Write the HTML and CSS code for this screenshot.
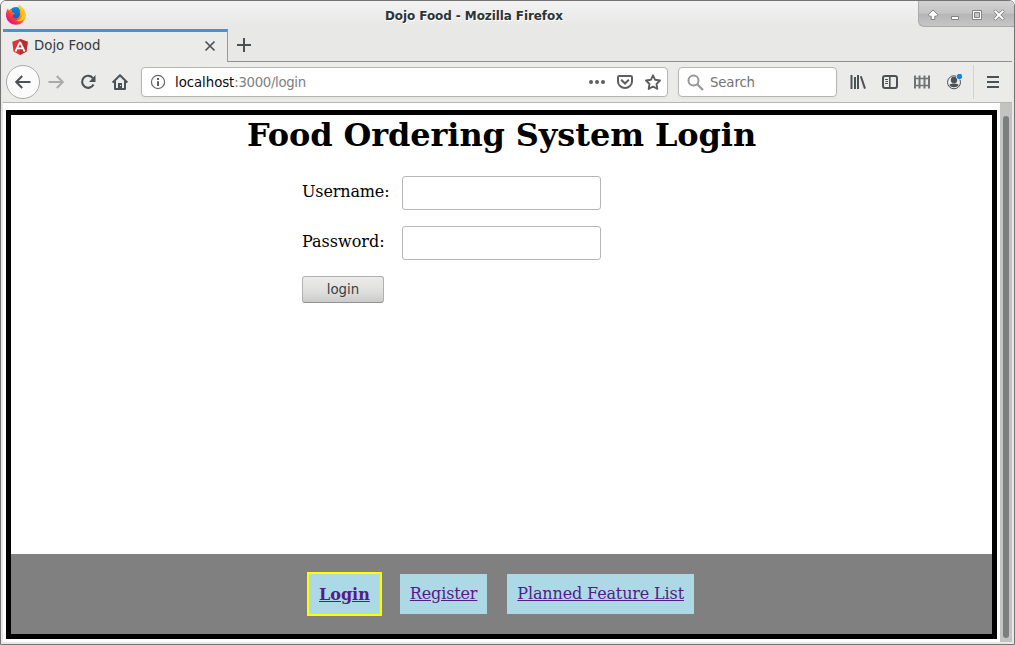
FILE: index.html
```html
<!DOCTYPE html>
<html lang="en">
<head>
<meta charset="utf-8">
<title>Dojo Food</title>
<link rel="stylesheet" href="styles.css">
</head>
<body>
<div class="window">
  <header class="titlebar">
    <svg class="logo" width="22" height="22" viewBox="0 0 22 22">
      <defs>
        <linearGradient id="fox" x1="0.85" y1="0.1" x2="0.2" y2="0.85"><stop offset="0" stop-color="#ffe226"/><stop offset=".4" stop-color="#ff9a16"/><stop offset=".72" stop-color="#ff3b35"/><stop offset="1" stop-color="#e3147f"/></linearGradient>
        <linearGradient id="globe" x1="0.6" y1="0" x2="0.4" y2="1"><stop offset="0" stop-color="#0a8be0"/><stop offset="1" stop-color="#2848a8"/></linearGradient>
      </defs>
      <circle cx="11" cy="10.500" r="7.500" fill="url(#globe)"/>
      <path d="M13.500 1c2 1 3.200 2.200 4 3.800 2.500 2 3.500 4.500 3.300 7.200A10 10 0 0 1 1 12.500C.7 9 1.500 6.500 3 4.500l.8 2C5 5.500 6 5.500 7 6L6.800 8l3.200 1.500-2.500 1.800c.5 3.200 3.500 3.900 5.500 2.400 2.300-1.500 2.700-4 1.500-6C15.500 8 15.500 6.500 14.500 5.500 13.500 4 13 2.500 13.500 1Z" fill="url(#fox)"/>
      <path d="M14 1c3 3 4.500 6.500 3.500 10.500-1 3-3.500 5-6.500 5 4.500 2 9-1 9.600-5C21 7.500 18 3 14 1Z" fill="#ffc81c"/>
    </svg>
    <div class="window-title">Dojo Food - Mozilla Firefox</div>
    <div class="window-controls">
      <svg width="97" height="27" viewBox="0 0 97 27">
        <g fill="#fff" stroke="#828282" stroke-width="1">
          <path d="M15 10l4.800 4.700-1.300 1.500H16.800v3.300h-3.600v-3.300h-1.700l-1.300-1.500z"/>
          <path d="M33.500 16.500h7v3h-7z"/>
          <path d="M54.500 10.500h9v9h-9z"/><path d="M56.500 12.500h5v5h-5z" fill="#c5c5c5"/>
          <path d="M77.500 9.700l3.500 3.500 3.500-3.500 1.800 1.800-3.500 3.500 3.500 3.500-1.800 1.800-3.500-3.500-3.500 3.500-1.800-1.800 3.500-3.500-3.500-3.500z"/>
        </g>
      </svg>
    </div>
  </header>
  <div class="tabstrip">
    <div class="tab">
      <svg width="16" height="16" viewBox="0 0 16 16"><path d="M8 0l7.700 2.700-1.200 9.800L8 16l-6.500-3.500L.3 2.700z" fill="#e23237"/><path d="M8 0l7.700 2.700-1.200 9.800L8 16z" fill="#b52e31"/><path d="M8 2.800l-4.600 9.700M8 2.800l4.600 9.700M5.500 9.300h5" stroke="#fff" stroke-width="1.800" fill="none"/></svg>
      <span class="tab-name">Dojo Food</span>
      <svg class="tab-close" width="12" height="12" viewBox="0 0 12 12"><path d="M1.500 1.500l9 9m0-9l-9 9" stroke="#4c5356" stroke-width="1.700"/></svg>
    </div>
    <div class="tab-rest">
      <svg width="14" height="14" viewBox="0 0 14 14"><path d="M7 0v14M0 7h14" stroke="#4a5255" stroke-width="2"/></svg>
    </div>
  </div>
  <nav class="toolbar">
    <div class="back"><svg width="16" height="16" viewBox="0 0 16 16"><path d="M15.500 8H1.500M7.200 2L1.200 8l6 6" fill="none" stroke="#4a5255" stroke-width="2"/></svg></div>
    <svg class="icon forward" width="16" height="16" viewBox="0 0 16 16"><path d="M.5 8h14M8.800 2l6 6-6 6" fill="none" stroke="#aaa" stroke-width="2"/></svg>
    <svg class="icon reload" width="16" height="16" viewBox="0 0 16 16"><path d="M13 4.300A6 6 0 1 0 13.500 10.500" fill="none" stroke="#4a5255" stroke-width="2.100"/><path d="M15.500 1v7H9z" fill="#4a5255"/></svg>
    <svg class="icon home" width="16" height="16" viewBox="0 0 16 16"><path d="M.6 8.600L8 1.300l7.400 7.300M3 7v8h10V7" fill="none" stroke="#4a5255" stroke-width="2" stroke-linejoin="round"/><path d="M6 9h4v6H6z" fill="#4a5255"/><path d="M8 11h1v1H8z" fill="#eee"/></svg>
    <div class="address field">
      <svg width="16" height="16" viewBox="0 0 16 16"><circle cx="8" cy="8" r="6.600" fill="none" stroke="#68696b" stroke-width="1.200"/><path d="M8 7.200V12M8 4v2" stroke="#5b5c5d" stroke-width="2"/></svg>
      <span class="url"><span class="host">localhost</span><span class="path">:3000/login</span></span>
      <svg width="16" height="16" viewBox="0 0 16 16" fill="#5d5e5f"><circle cx="2" cy="8" r="2"/><circle cx="8" cy="8" r="2"/><circle cx="14" cy="8" r="2"/></svg>
      <svg width="16" height="16" viewBox="0 0 16 16" fill="none" stroke="#5d5e5f" stroke-width="2"><path d="M2.300 2h11.400q1.300 0 1.300 1.300V7.500a7 6.500 0 0 1-14 0V3.300Q1 2 2.300 2Z"/><path d="M4.700 6.300L8 9.500l3.300-3.200" stroke-linecap="round"/></svg>
      <svg width="16" height="16" viewBox="0 0 16 16"><path d="M8 1.300l2.100 4.500 4.900.7-3.500 3.500.8 4.900L8 12.500l-4.300 2.400.8-4.900L1 6.500l4.900-.7z" fill="none" stroke="#5d5e5f" stroke-width="1.900" stroke-linejoin="round"/></svg>
    </div>
    <div class="search field">
      <svg width="17" height="17" viewBox="0 0 17 17"><circle cx="6.500" cy="6.500" r="5" fill="none" stroke="#969696" stroke-width="2"/><path d="M10 10l6 6" stroke="#969696" stroke-width="2.200"/></svg>
      <span>Search</span>
    </div>
    <div class="tools">
      <svg width="16" height="16" viewBox="0 0 16 16"><path d="M1.500 1v14M5 3v12M8 1v14M10.800 2.200L15 14.600" fill="none" stroke="#4a5255" stroke-width="2"/></svg>
      <svg width="16" height="16" viewBox="0 0 16 16"><rect x="1" y="2" width="14" height="12" rx="2" fill="none" stroke="#4a5255" stroke-width="2"/><path d="M7.800 2v12" stroke="#4a5255" stroke-width="1.600"/><path d="M3 5.500h3M3.500 7.500H6M3 9.500h3" stroke="#4a5255"/></svg>
      <svg width="16" height="16" viewBox="0 0 16 16"><path d="M1 1.500v13M5.500 1.500v13M10.500 1.500v13M15 1.500v13" stroke="#707476" stroke-width="2"/><path d="M0 4.500h16M0 11.500h16" stroke="#707476" stroke-width="1.300"/></svg>
      <svg width="16" height="16" viewBox="0 0 16 16"><circle cx="8" cy="8.300" r="6.500" fill="none" stroke="#4a5255"/><circle cx="8" cy="6" r="3.200" fill="#4a5255"/><path d="M3.300 11c1-1.300 2.500-1 3.400-1.500h2.600c.9.500 2.400.2 3.400 1.500-1.500 3-7.900 3-9.400 0z" fill="#4a5255"/><circle cx="13.500" cy="2.500" r="3.300" fill="#ebebea"/><circle cx="13.500" cy="2.500" r="2.700" fill="#0a84ff"/></svg>
    </div>
    <div class="menu"><svg width="12" height="12" viewBox="0 0 12 12"><path d="M0 1h12M0 6h12M0 11h12" stroke="#4a5255" stroke-width="2"/></svg></div>
  </nav>
  <div class="viewport">
    <main class="page">
      <section class="content">
        <h1>Food Ordering System Login</h1>
        <form class="form">
          <label class="tight" for="user">Username:</label><input id="user" type="text">
          <label for="pass">Password:</label><input id="pass" type="password">
          <button type="button">login</button>
        </form>
      </section>
      <footer class="links">
        <a class="active" href="#login">Login</a>
        <a class="tight" href="#register">Register</a>
        <a class="tight" href="#features">Planned Feature List</a>
      </footer>
    </main>
    <div class="scrollbar"><div class="thumb"></div></div>
  </div>
</div>
</body>
</html>
```
FILE: styles.css
```css
* { box-sizing: border-box; }
html { background: #fff; }
body { margin: 0; overflow: hidden; }
svg { display: block; flex: none; }

.window {
  width: 1015px;
  height: 645px;
  display: flex;
  flex-direction: column;
  border: 1px solid #757373;
  border-radius: 6px 6px 0 0;
  background: #e8e8e7;
  padding: 0 2px 2px;
  overflow: hidden;
  font: 13.333px "DejaVu Sans", sans-serif;
}
.titlebar {
  height: 28px;
  flex: none;
  margin: 0 -2px;
  display: flex;
  background: linear-gradient(#f4f3f3, #e8e8e7 24px);
}
.logo { margin: 3px 0 0 4px; }
.window-title {
  flex: 1;
  padding-left: 358px;
  font: bold 12px/31px "DejaVu Sans", sans-serif;
  letter-spacing: -0.09px;
  color: #2e3436;
  text-shadow: 1px 1px #fff;
  white-space: nowrap;
}
.window-controls {
  width: 96px;
  height: 26px;
  border-left: 1px solid #aaa;
  border-bottom: 1px solid #aaa;
  border-radius: 0 0 0 6px;
  background: linear-gradient(#d2d2d2, #c4c4c4 48%, #b6b6b6 54%, #c6c6c6);
}
.window-controls svg { margin: -1px 0 0 -1px; }

.tabstrip { height: 33px; flex: none; display: flex; }
.tab {
  width: 225px;
  border-top: 3px solid #4a90d9;
  border-right: 1px solid #999;
  padding: 0 11px 0 9px;
  display: flex;
  align-items: center;
  gap: 6px;
  color: #363b3d;
  background: #ebebea;
}
.tab-name { flex: 1; padding-bottom: 4px; }
.tab-close { margin-bottom: 2px; }
.tab-rest { flex: 1; border-bottom: 1px solid #919191; padding: 9px 0 0 9px; }

.toolbar {
  height: 41px;
  flex: none;
  display: flex;
  align-items: center;
  background: #ebebea;
  border-bottom: 1px solid #b5b5b2;
  padding-left: 3px;
}
.back {
  width: 34px;
  height: 34px;
  border: 1px solid #aaa;
  border-radius: 50%;
  background: #fbfbfb;
  display: grid;
  place-items: center;
}
.forward { margin-left: 8px; }
.reload { margin-left: 16px; }
.home { margin-left: 16px; }
.field {
  height: 30px;
  border: 1px solid #b6b6b3;
  border-radius: 4px;
  background: #fff;
  display: flex;
  align-items: center;
  box-shadow: 0 1px 3px #0000000c;
}
.address { width: 527px; margin-left: 13px; padding: 0 6px 0 8px; gap: 12px; }
.url { flex: 1; margin-left: -3px; color: #808080; }
.host { color: #0c0c0d; letter-spacing: -0.06px; }
.path { letter-spacing: -0.35px; }
.search { width: 159px; margin-left: 10px; padding-left: 8px; gap: 6px; color: #737373; letter-spacing: -0.15px; }
.tools { display: flex; gap: 16px; margin-left: 13px; }
.menu {
  height: 34px;
  margin-left: 11px;
  padding-left: 13px;
  border-left: 1px solid #d2d2d1;
  display: flex;
  align-items: center;
}

.viewport { flex: 1; min-height: 0; display: flex; background: #fff; }
.page {
  width: 991px;
  margin: 7px 3px 3px;
  border: 5px solid #000;
  display: flex;
  flex-direction: column;
  font: 16px "DejaVu Serif", serif;
  color: #000;
}
.content { flex: 1; }
h1 { margin: 0; font-size: 32px; line-height: 40px; letter-spacing: -0.11px; text-align: center; }
.form {
  margin: 21px 0 0 291px;
  display: grid;
  grid-template-columns: 100px 199px;
  grid-auto-rows: 34px;
  row-gap: 16px;
}
label { line-height: 31px; }
.tight { letter-spacing: -0.14px; }
input {
  width: 199px;
  height: 34px;
  border: 1px solid #b6b6b6;
  border-radius: 3px;
  background: #fff;
}
button {
  width: 82px;
  height: 27px;
  padding: 0;
  border: 1px solid #b0b0b0;
  border-bottom-color: #929290;
  border-radius: 3px;
  background: linear-gradient(#ebebeb, #dededd 60%, #cbcbca);
  font: 13.333px "DejaVu Sans", sans-serif;
  color: #3b4043;
}
.links {
  height: 80px;
  display: flex;
  align-items: center;
  padding-left: 296px;
  background: #808080;
}
.links a {
  height: 40px;
  padding: 0 10px;
  line-height: 39px;
  background: #add8e6;
  color: #551a8b;
  white-space: nowrap;
}
.links a + a { margin-left: 20px; }
.links .active { height: 44px; border: 2px solid #ff0; line-height: 41px; font-weight: bold; }
.links .active + a { margin-left: 18px; }

.scrollbar { width: 12px; padding: 13px 3px 4px; background: #c3c3c2; }
.thumb { height: 100%; border-radius: 3px; background: #7b7f80; }
```
